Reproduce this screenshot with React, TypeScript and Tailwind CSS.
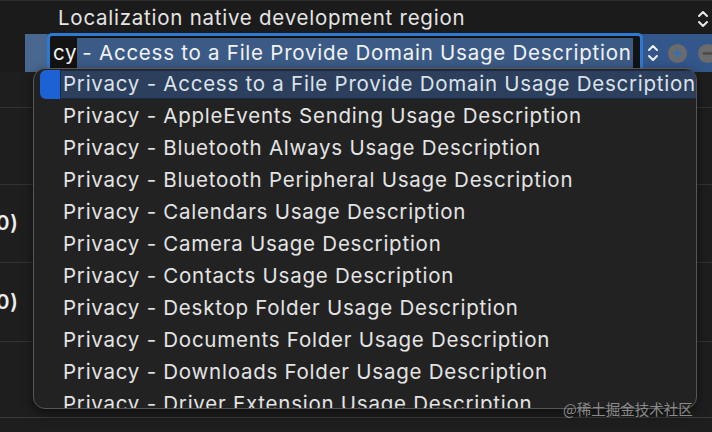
const items = [
  "Privacy - AppleEvents Sending Usage Description",
  "Privacy - Bluetooth Always Usage Description",
  "Privacy - Bluetooth Peripheral Usage Description",
  "Privacy - Calendars Usage Description",
  "Privacy - Camera Usage Description",
  "Privacy - Contacts Usage Description",
  "Privacy - Desktop Folder Usage Description",
  "Privacy - Documents Folder Usage Description",
  "Privacy - Downloads Folder Usage Description",
  "Privacy - Driver Extension Usage Description",
];

function UpDown({ className }: { className?: string }) {
  return (
    <svg viewBox="0 0 12 22" className={className} fill="none" stroke="currentColor" strokeWidth="2" strokeLinecap="round" strokeLinejoin="round">
      <path d="M2 8l4-4 4 4" />
      <path d="M2 14l4 4 4-4" />
    </svg>
  );
}

function CircleButton({ minus }: { minus?: boolean }) {
  return (
    <div className="flex h-[19px] w-[19px] shrink-0 items-center justify-center rounded-full bg-[#6b6b6b]">
      <svg viewBox="0 0 12 12" className="h-[11px] w-[11px]" stroke={minus ? "#4a4a4a" : "#3c6ea8"} strokeWidth="2.6" strokeLinecap="round">
        <path d="M2 6h8" />
        {!minus && <path d="M6 2v8" />}
      </svg>
    </div>
  );
}

export default function App() {
  return (
    <div className="relative h-[432px] w-[712px] overflow-hidden bg-[#1e1e1e] font-['Inter',sans-serif] text-[20.5px] tracking-[0.75px] text-[#e4e4e4]">
      {/* table rows behind the popup */}
      <div className="flex flex-col">
        <div className="flex h-[34px] items-center justify-between border-t border-[#2c2c2c] bg-[#1b1b1b] pl-[58px] pr-[3px] pt-[2px]">
          <span>Localization native development region</span>
          <UpDown className="h-[22px] w-[12px] text-[#e8e8e8]" />
        </div>

        <div className="flex h-[38px] items-center bg-[#1b1b1b] pl-[25px]">
          <div className="flex h-[38px] flex-1 items-center bg-[#33578a]">
            <div className="flex h-[38px] w-[22px] bg-[#48688f]" />
            <div className="flex h-[40px] w-[596px] items-center overflow-hidden rounded-[5px] border-[3px] border-[#2e7ad2] bg-[#131313] pl-[3px]">
              <span className="whitespace-nowrap text-[#f2f2f2]">cy</span>
              <span className="whitespace-nowrap bg-[#3b5b86] pl-[5px] pr-[1px] text-[#f2f2f2]">- Access to a File Provide Domain Usage Description</span>
            </div>
            <UpDown className="ml-[4px] h-[22px] w-[12px] text-[#f0f0f0]" />
            <div className="ml-[9px] flex gap-[11px]">
              <CircleButton />
              <CircleButton minus />
            </div>
          </div>
        </div>

        <div className="h-[36px] border-b border-[#333]" />
        <div className="h-[77px] border-b border-[#333]" />
        <div className="flex h-[78px] items-center border-b border-[#333]">
          <span className="-ml-[4px] font-semibold text-[#ececec]">0)</span>
        </div>
        <div className="flex h-[79px] items-center border-b border-[#333]">
          <span className="-ml-[4px] font-semibold text-[#ececec]">0)</span>
        </div>
        <div className="h-[76px] border-b border-[#3a3a3a]" />
        <div className="flex-1 bg-[#1a1a1a]" />
      </div>

      {/* popup list */}
      <div className="absolute left-[33px] top-[68px] h-[341px] w-[664px] overflow-hidden rounded-[12px] border border-[#575757] bg-[#222222] shadow-[0_4px_12px_rgba(0,0,0,0.5)]">
        <div className="mx-[6px] mt-[1px] flex h-[29px] items-center rounded-[6px] bg-[#1c62d4]">
          <div className="ml-[20px] flex h-[29px] flex-1 items-center whitespace-nowrap border border-[#1b2a40] bg-[#2c3f5c] pl-[2px] text-[#dce2ea]">
            Privacy - Access to a File Provide Domain Usage Description
          </div>
        </div>
        <div className="flex flex-col pl-[29px] pt-[1px]">
          {items.map((t) => (
            <div key={t} className="flex h-[32px] items-center whitespace-nowrap">
              {t}
            </div>
          ))}
        </div>
      </div>

      <div className="absolute left-[563px] top-[398px] whitespace-nowrap font-['Noto_Sans_CJK_SC',sans-serif] text-[14.5px] tracking-normal text-[#8a8a8a]">
        @稀土掘金技术社区
      </div>
    </div>
  );
}
